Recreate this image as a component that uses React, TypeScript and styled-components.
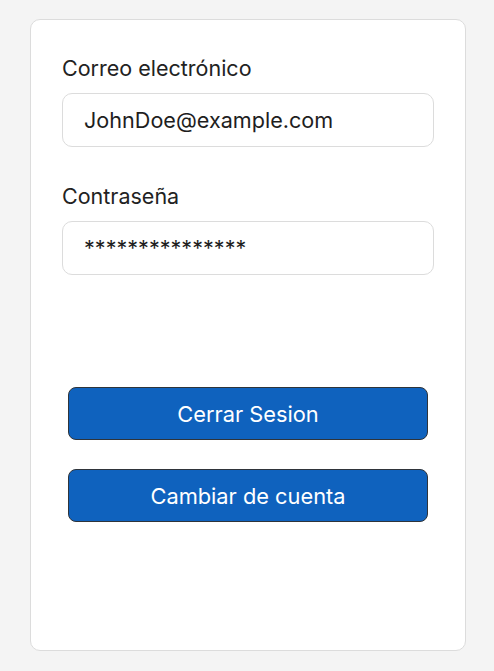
import React from "react";
import styled, { createGlobalStyle } from "styled-components";

const Global = createGlobalStyle`
  html, body { margin: 0; padding: 0; background: #f4f4f4; }
  body { font-family: Inter, "Noto Sans", sans-serif; }
`;

const Page = styled.div`
  padding: 19px 0 20px 30px;
`;

const Card = styled.div`
  width: 436px;
  height: 632px;
  box-sizing: border-box;
  background: #fff;
  border: 1px solid #dcdcdc;
  border-radius: 10px;
  padding: 36px 31px 0 31px;
  display: flex;
  flex-direction: column;
`;

const Field = styled.div<{ $gap?: number }>`
  display: flex;
  flex-direction: column;
  gap: 13px;
  margin-top: ${(p) => p.$gap ?? 0}px;
`;

const Label = styled.label`
  font-size: 21.5px;
  line-height: 24px;
  color: #222;
`;

const Input = styled.input`
  box-sizing: border-box;
  width: 100%;
  height: 54px;
  border: 1px solid #dcdcdc;
  border-radius: 10px;
  padding: 0 21px;
  font-family: Inter, "Noto Sans", sans-serif;
  font-size: 21.6px;
  color: #1e1e1e;
  background: #fff;
  outline: none;
`;

const Buttons = styled.div`
  display: flex;
  flex-direction: column;
  gap: 29px;
  margin-top: 112px;
  padding: 0 6px;
`;

const Button = styled.button`
  box-sizing: border-box;
  height: 53px;
  width: 100%;
  background: #0f62be;
  border: 1px solid #2f343a;
  border-radius: 8px;
  color: #fff;
  font-family: Inter, "Noto Sans", sans-serif;
  font-size: 21.8px;
  cursor: pointer;
`;

export default function App() {
  return (
    <>
      <Global />
      <Page>
        <Card>
          <Field>
            <Label>Correo electrónico</Label>
            <Input readOnly value="JohnDoe@example.com" />
          </Field>
          <Field $gap={37}>
            <Label>Contraseña</Label>
            <Input readOnly value="***************" />
          </Field>
          <Buttons>
            <Button>Cerrar Sesion</Button>
            <Button>Cambiar de cuenta</Button>
          </Buttons>
        </Card>
      </Page>
    </>
  );
}
